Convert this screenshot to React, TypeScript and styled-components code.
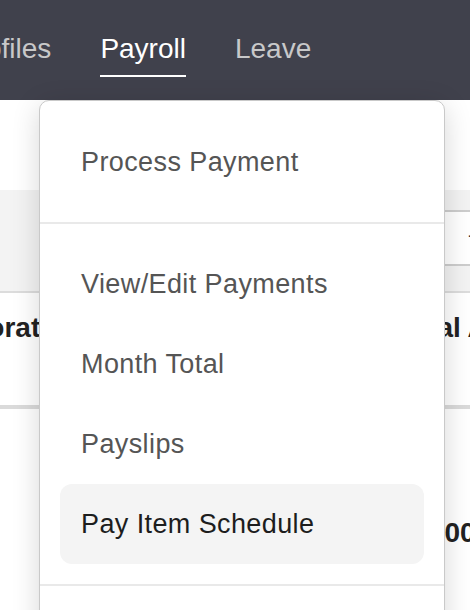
import React from "react";
import styled, { createGlobalStyle } from "styled-components";

const GlobalStyle = createGlobalStyle`
    html, body {
        margin: 0;
        padding: 0;
        background: #ffffff;
        overflow: hidden;
        font-family: "Liberation Sans", Arial, Helvetica, sans-serif;
    }
`

const Page = styled.div`
    position: relative;
    width: 470px;
    height: 610px;
    overflow: hidden;
`

const TopBar = styled.header`
    height: 100px;
    background: #40414c;
    overflow: hidden;
`

const NavList = styled.nav`
    display: flex;
    gap: 49px;
    margin-left: -42px;
    white-space: nowrap;
`

const NavItem = styled.span<{ $active?: boolean }>`
    display: block;
    padding: 35px 0 12px;
    font-size: 28px;
    line-height: 28px;
    color: ${(p) => (p.$active ? "#ffffff" : "#c8c8c9")};
    border-bottom: 2px solid ${(p) => (p.$active ? "#ffffff" : "transparent")};
`

const Content = styled.main`
    width: 760px;
    padding-top: 90px;
`

const FilterBar = styled.div`
    display: flex;
    height: 103px;
    padding-top: 20px;
    box-sizing: border-box;
    background: #f3f3f3;
    border-bottom: 2px solid #dcdcdc;
`

const SelectBox = styled.div`
    margin-left: 420px;
    width: 300px;
    height: 56px;
    box-sizing: border-box;
    padding-left: 48px;
    background: #ffffff;
    border-top: 2px solid #cdcdcd;
    border-bottom: 2px solid #cdcdcd;
    font-size: 20px;
    line-height: 46px;
    color: #333333;
`

const Row = styled.div<{ $head?: boolean; $pad: number }>`
    display: flex;
    margin-left: -78px;
    height: ${(p) => (p.$head ? 116 : 200)}px;
    padding-top: ${(p) => p.$pad}px;
    box-sizing: border-box;
    border-bottom: ${(p) => (p.$head ? "4px solid #dadada" : "none")};
`

const Cell = styled.div<{ $w: number }>`
    width: ${(p) => p.$w}px;
    flex-shrink: 0;
    font-size: 28px;
    line-height: 34px;
    font-weight: 700;
    color: #222222;
    white-space: nowrap;
`

const Menu = styled.div`
    position: absolute;
    top: 100px;
    left: 39px;
    width: 406px;
    box-sizing: border-box;
    background: #ffffff;
    border: 1px solid #c9c9c9;
    border-radius: 10px;
    box-shadow: 0 6px 28px rgba(0, 0, 0, 0.16);
`

const Group = styled.div<{ $first?: boolean }>`
    padding: ${(p) => (p.$first ? 21 : 20)}px 20px 20px;
    & + & {
        border-top: 2px solid #e9e9e9;
    }
`

const MenuItem = styled.div<{ $active?: boolean }>`
    height: 80px;
    padding-left: 21px;
    border-radius: 12px;
    font-size: 27px;
    letter-spacing: 0.4px;
    line-height: 80px;
    white-space: nowrap;
    color: ${(p) => (p.$active ? "#1d1d1d" : "#555555")};
    background: ${(p) => (p.$active ? "#f4f4f4" : "transparent")};
`

const payrollItems = ["View/Edit Payments", "Month Total", "Payslips", "Pay Item Schedule"]

export default function App() {
    return (
        <>
            <GlobalStyle/>
            <Page>
                <TopBar>
                    <NavList>
                        <NavItem>Profiles</NavItem>
                        <NavItem $active>Payroll</NavItem>
                        <NavItem>Leave</NavItem>
                    </NavList>
                </TopBar>
                <Content>
                    <FilterBar>
                        <SelectBox>- Select -</SelectBox>
                    </FilterBar>
                    <Row $head $pad={18}>
                        <Cell $w={474}>Corporate Name</Cell>
                        <Cell $w={300}>Total Amount</Cell>
                    </Row>
                    <Row $pad={107}>
                        <Cell $w={468}></Cell>
                        <Cell $w={300}>13,000.00</Cell>
                    </Row>
                </Content>
                <Menu>
                    <Group $first>
                        <MenuItem>Process Payment</MenuItem>
                    </Group>
                    <Group>
                        {payrollItems.map((item, index) => (
                            <MenuItem key={index.toString()} $active={item === "Pay Item Schedule"}>
                                {item}
                            </MenuItem>
                        ))}
                    </Group>
                    <Group>
                        <MenuItem>Settings</MenuItem>
                    </Group>
                </Menu>
            </Page>
        </>
    )
}
